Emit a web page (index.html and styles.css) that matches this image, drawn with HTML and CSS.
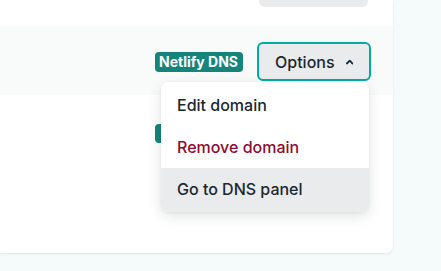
FILE: index.html
```html
<!DOCTYPE html>
<html>
<head>
<meta charset="utf-8">
<link rel="stylesheet" href="styles.css">
</head>
<body>
<div class="card">
  <div class="row-top">
    <div class="top-btn"></div>
  </div>
  <div class="row row-active">
    <span class="badge">Netlify DNS</span>
    <div class="options-wrap">
      <button class="options">Options
        <svg class="chev" width="10" height="6" viewBox="0 0 10 6"><path d="M1.2 5 L5 1.3 L8.8 5" fill="none" stroke="#1b2730" stroke-width="2.4" stroke-linejoin="round" stroke-linecap="round"/></svg>
      </button>
      <div class="menu">
        <div class="item">Edit domain</div>
        <div class="item danger">Remove domain</div>
        <div class="item hover">Go to DNS panel</div>
      </div>
    </div>
  </div>
  <div class="row row-plain">
    <span class="badge badge-hidden"></span>
  </div>
</div>
</body>
</html>
```
FILE: styles.css
```css
* { box-sizing: border-box; }
html, body { margin: 0; padding: 0; }
body {
  background: #f5fafa;
  font-family: Inter, "Noto Sans", sans-serif;
  color: #1b2730;
  width: 441px;
  height: 271px;
  overflow: hidden;
}
.card {
  width: 393px;
  height: 253px;
  background: #fff;
  border-radius: 0 0 7px 0;
  box-shadow: 0 1px 3px rgba(14, 30, 37, 0.08);
  display: flex;
  flex-direction: column;
}
.row-top {
  height: 26px;
  display: flex;
  justify-content: flex-end;
  padding-right: 25px;
}
.top-btn {
  width: 109px;
  height: 34px;
  margin-top: -27px;
  background: #e9ebed;
  border-radius: 6px;
}
.row {
  display: flex;
  justify-content: flex-end;
  padding-right: 22px;
}
.row-active {
  height: 69px;
  background: #f9fafa;
  align-items: center;
  gap: 14px;
  padding-top: 2px;
}
.row-plain {
  padding-top: 28px;
  padding-right: 150px;
}
.badge {
  background: #15847b;
  color: #fff;
  font-weight: 700;
  font-size: 14px;
  line-height: 20px;
  height: 20px;
  padding: 0 5px 0 4px;
  border-radius: 4px;
  margin-top: 1px;
  white-space: nowrap;
}
.badge-hidden {
  width: 88px;
  height: 19px;
}
.options-wrap {
  position: relative;
}
.options {
  display: flex;
  align-items: center;
  gap: 11px;
  height: 39px;
  width: 114px;
  padding: 0 16px;
  background: #e9ebed;
  border: 2px solid #00ad9f;
  border-radius: 6px;
  font-family: inherit;
  font-size: 16px;
  font-weight: 500;
  color: #1b2730;
}
.chev { margin-top: 1px; }
.menu {
  position: absolute;
  top: calc(100% + 1px);
  right: 2px;
  width: 208px;
  padding-top: 2px;
  background: #fff;
  border-radius: 7px;
  box-shadow: 0 4px 14px rgba(14, 30, 37, 0.12), 0 1px 3px rgba(14, 30, 37, 0.06);
  overflow: hidden;
  z-index: 2;
}
.item {
  height: 42px;
  line-height: 22px;
  padding: 10px 16px;
  font-size: 16px;
  font-weight: 500;
  color: #1b2730;
  white-space: nowrap;
}
.item.danger { color: #900b31; }
.item.hover {
  background: #e9ebed;
  height: 44px;
  padding-top: 10px;
  padding-bottom: 12px;
}
```
